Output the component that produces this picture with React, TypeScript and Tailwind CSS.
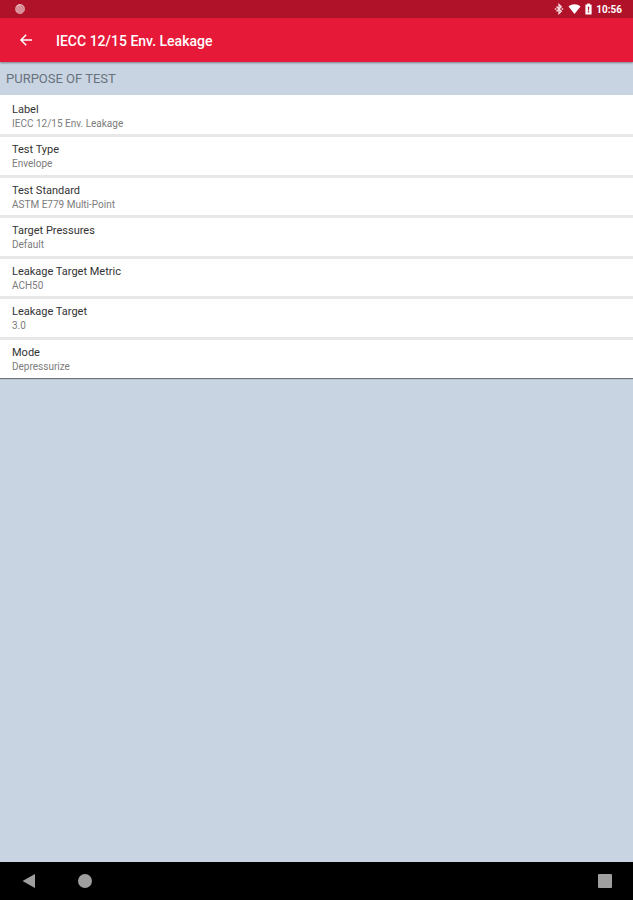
const settings = [
  { label: "Label", value: "IECC 12/15 Env. Leakage" },
  { label: "Test Type", value: "Envelope" },
  { label: "Test Standard", value: "ASTM E779 Multi-Point" },
  { label: "Target Pressures", value: "Default" },
  { label: "Leakage Target Metric", value: "ACH50" },
  { label: "Leakage Target", value: "3.0" },
  { label: "Mode", value: "Depressurize" },
]

function StatusBar() {
  return (
    <div className="flex h-[18px] items-center justify-between bg-[#b01229] pr-[11px] pl-[14px] text-white">
      <svg width="12" height="12" viewBox="0 0 12 12" aria-hidden="true">
        <path d="M6 1a5 5 0 0 1 5 5c0 1-.3 1.7-.8 2.4L7.8 10.7A5 5 0 1 1 6 1Z" fill="#dd98a2" />
        <path d="M2 4.5 7.5 10M3.5 2.5 9.5 8.5M6 2l4 4" stroke="#c8707c" strokeWidth="0.9" />
        <path d="M3 3.2c1-1 2.4-1.4 3.6-1.2" stroke="#f3ccd1" fill="none" />
      </svg>
      <div className="flex items-center">
        <svg width="10" height="12" viewBox="0 0 10 12" fill="none" stroke="#f7dde0" aria-hidden="true">
          <path d="M2.5 3.5 7.3 8.3 5 10.5V1.5l2.3 2.2L2.5 8.5" strokeWidth="1.3" />
          <path d="M.8 5.2h1.6v1.6H.8zM7.6 5.2h1.6v1.6H7.6z" fill="#f7dde0" stroke="none" />
        </svg>
        <svg className="ml-1" width="13" height="12" viewBox="0 0 13 12" fill="currentColor" aria-hidden="true">
          <path d="M.5 3.6C4 .6 9 .6 12.5 3.6L6.5 11Z" />
        </svg>
        <svg className="ml-1" width="7" height="12" viewBox="0 0 7 12" aria-hidden="true">
          <path d="M2.2.5h2.6v1H6a.6.6 0 0 1 .6.6v8.8a.6.6 0 0 1-.6.6H1a.6.6 0 0 1-.6-.6V2.1a.6.6 0 0 1 .6-.6h1.2Z" fill="currentColor" />
          <path d="M2.8 3.8h1.5l-.3 3.6h-.9ZM2.8 8.2h1.4v1.3H2.8Z" fill="#b01229" />
        </svg>
        <span className="ml-1 pt-px text-[10px] leading-3 font-bold">10:56</span>
      </div>
    </div>
  )
}

function AppBar() {
  return (
    <header className="relative flex h-11 items-center bg-[#e61938] pl-[19px] text-white shadow-[0_1px_2px_rgba(0,0,0,0.4)]">
      <button type="button" aria-label="Back" className="flex size-[14px] items-center justify-center">
        <svg width="14" height="14" viewBox="0 0 14 14" fill="none" stroke="currentColor" strokeWidth="1.5" aria-hidden="true">
          <path d="M13 7H2.2M7.2 1.8 2 7l5.2 5.2" />
        </svg>
      </button>
      <h1 className="ml-[23px] pt-0.5 text-sm font-medium">IECC 12/15 Env. Leakage</h1>
    </header>
  )
}

function NavigationBar() {
  return (
    <nav className="flex h-[38px] items-center bg-black pr-[21px] pl-[22px] text-[#9f9f9f]">
      <button type="button" aria-label="Back">
        <svg width="14" height="14" viewBox="0 0 14 14" fill="currentColor" aria-hidden="true">
          <path d="M13 0v14L.5 7Z" />
        </svg>
      </button>
      <button type="button" aria-label="Home" className="ml-[42px]">
        <svg width="14" height="14" viewBox="0 0 14 14" fill="currentColor" aria-hidden="true">
          <circle cx="7" cy="7" r="7" />
        </svg>
      </button>
      <button type="button" aria-label="Recent apps" className="ml-auto">
        <svg width="14" height="14" viewBox="0 0 14 14" fill="currentColor" aria-hidden="true">
          <rect width="14" height="14" rx="1" />
        </svg>
      </button>
    </nav>
  )
}

export default function App() {
  return (
    <div className="flex min-h-screen flex-col bg-[#c8d4e2] font-[Roboto,sans-serif]">
      <StatusBar />
      <AppBar />
      <main className="flex-1">
        <h2 className="px-1.5 pt-[9px] pb-2 text-[13px] leading-4 text-[#68727d]">PURPOSE OF TEST</h2>
        <ul className="bg-white pt-0.5 pb-px shadow-[0_1px_1px_rgba(0,0,0,0.45)]">
          {settings.map((setting) => (
            <li key={setting.label} className="border-b-3 border-[#e8e8e8] even:pb-px last:border-b-0">
              <button type="button" className="block w-full px-3 pt-1.5 pb-[3px] text-left">
                <span className="block text-[11px] leading-[14px] text-[#333333]">{setting.label}</span>
                <span className="block text-[10px] leading-[14px] text-[#7c7c7c]">{setting.value}</span>
              </button>
            </li>
          ))}
        </ul>
      </main>
      <NavigationBar />
    </div>
  )
}
